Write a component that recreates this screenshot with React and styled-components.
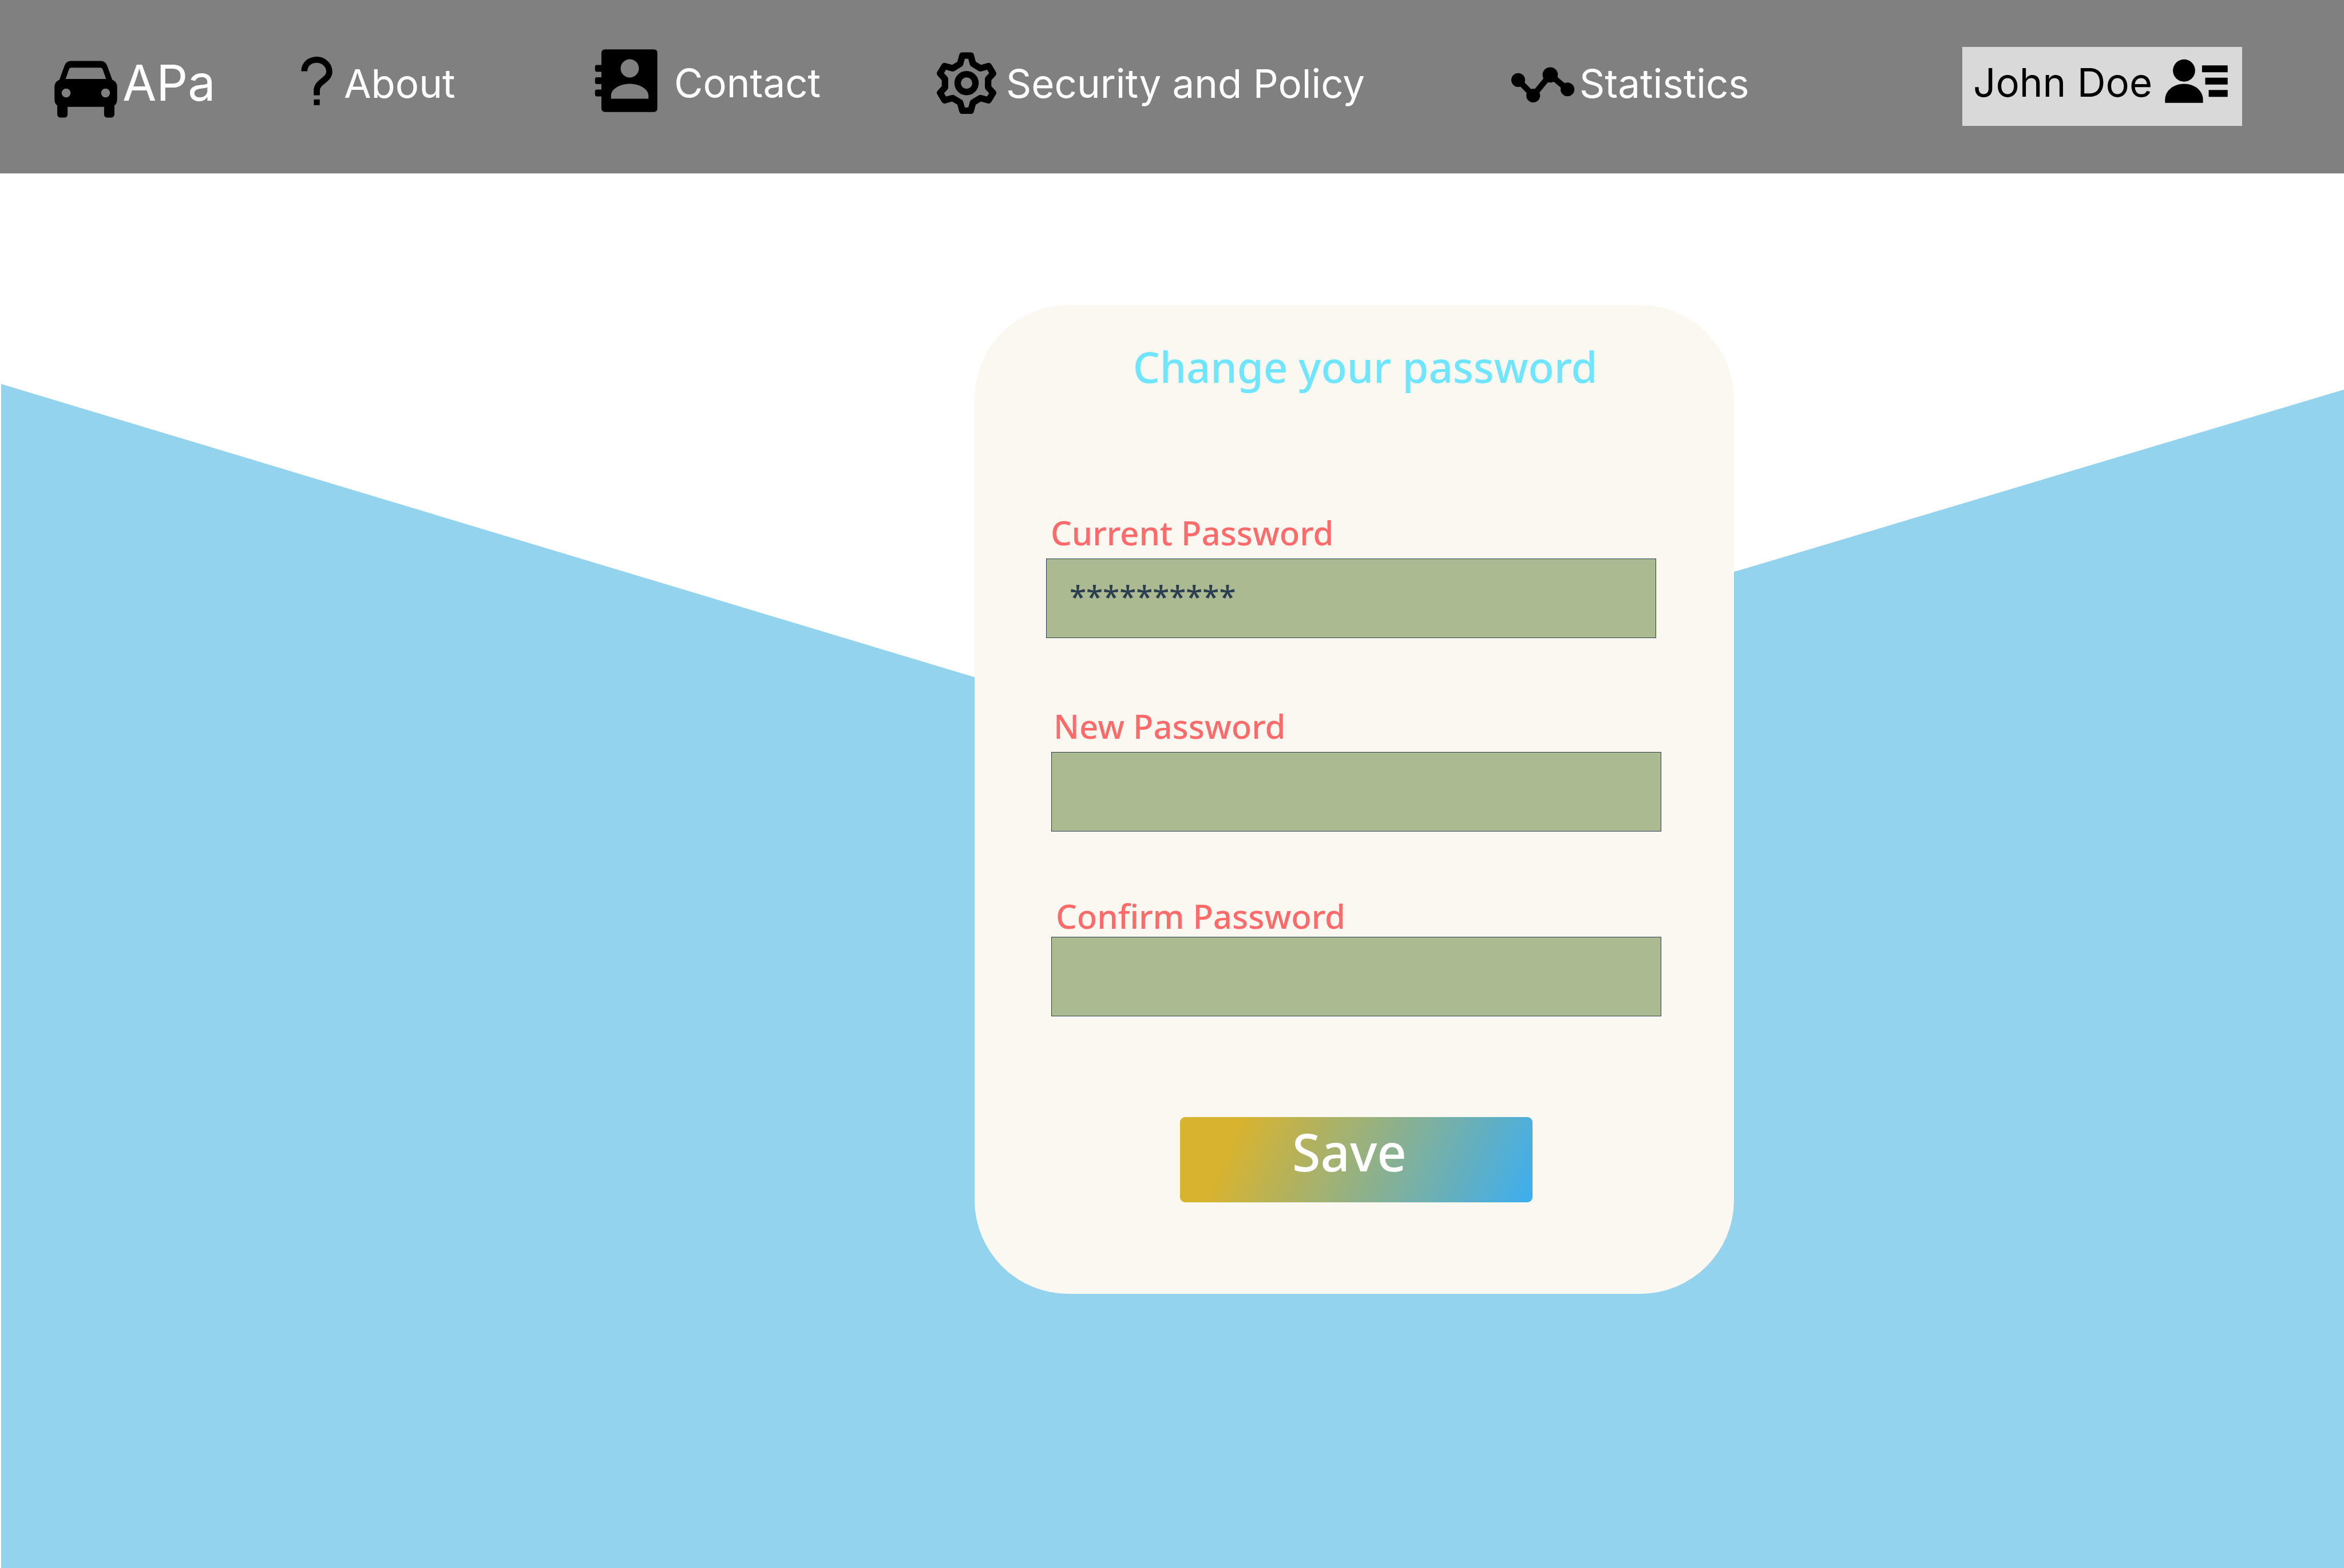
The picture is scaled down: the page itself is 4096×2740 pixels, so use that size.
import React from "react";
import styled, { createGlobalStyle } from "styled-components";

const GlobalStyle = createGlobalStyle`
  *, *::before, *::after { box-sizing: border-box; }
  body {
    margin: 0;
    background: #ffffff;
    font-family: Inter, "Liberation Sans", sans-serif;
  }
`;

const Page = styled.div`
  display: flex;
  flex-direction: column;
  min-height: 100vh;
`;

const Header = styled.header`
  display: grid;
  grid-template-columns: 430fr 514fr 599fr 1003fr 789fr 489fr 178fr;
  align-items: center;
  height: 303px;
  padding: 0 0 2px 94px;
  background: #808080;
`;

const Nav = styled.nav`
  display: contents;
`;

const NavLink = styled.a`
  display: flex;
  align-items: center;
  gap: ${({ $gap }) => $gap}px;
  padding-bottom: 10px;
  color: #ffffff;
  font-size: ${({ $brand }) => ($brand ? 86 : 69)}px;
  line-height: 100px;
  text-decoration: none;
  white-space: nowrap;
`;

const Account = styled.button`
  display: flex;
  align-items: center;
  justify-content: space-between;
  height: 138px;
  padding: 0 24px 14px 19px;
  border: 0;
  background: #d9d9d9;
  color: #000000;
  font: inherit;
  font-size: 69px;
  line-height: 100px;
  white-space: nowrap;
`;

const Icon = styled.svg`
  flex: none;
  width: ${({ $width }) => $width}px;
  fill: #000000;
`;

const Main = styled.main`
  flex: 1;
  display: grid;
  grid-template-columns: 1703fr 1327fr 1066fr;
  align-items: start;
`;

const Backdrop = styled.div`
  grid-area: 1 / 1 / 2 / 4;
  align-self: stretch;
  margin-left: 2px;
  background: #94d3ee;
  clip-path: polygon(0 15.1%, 50.2% 40.5%, 100% 15.5%, 100% 100%, 0 100%);
`;

const Card = styled.form`
  grid-area: 1 / 2 / 2 / 3;
  z-index: 1;
  display: flex;
  flex-direction: column;
  margin: 230px 0 80px;
  padding: 58px 127px 160px 125px;
  border-radius: 164px;
  background: #fbf8f1;
  font-family: "Noto Sans", "Open Sans", sans-serif;
  font-weight: 500;
`;

const Title = styled.h1`
  margin: 0 0 208px;
  padding-left: 40px;
  color: #70e5ff;
  font-size: 74px;
  font-weight: inherit;
  line-height: 100px;
  text-align: center;
`;

const Field = styled.div`
  display: flex;
  flex-direction: column;
  gap: ${({ $tight }) => ($tight ? 4 : 13)}px;
  margin: ${({ $start }) => ($start ? "0 9px 6px 0" : "0 0 0 9px")};
`;

const Fields = styled.div`
  display: flex;
  flex-direction: column;
  gap: 116px;
`;

const Label = styled.label`
  padding-left: ${({ $inset }) => $inset}px;
  color: #ff6b6b;
  font-size: 58px;
  line-height: 64px;
`;

const Input = styled.input`
  width: 100%;
  height: 139px;
  padding: 0 40px 8px;
  border: 1px solid #2c3e50;
  border-radius: 0;
  outline: 0;
  background: #abba90;
  color: #2c3e50;
  font: inherit;
  font-size: 53px;
`;

const Actions = styled.div`
  display: flex;
  justify-content: center;
  margin-top: 176px;
  padding-left: 9px;
`;

const SaveButton = styled.button`
  width: 616px;
  height: 149px;
  padding: 0 24px 30px 0;
  border: 0;
  border-radius: 9px;
  background: linear-gradient(114deg, #d8b32f 16%, #3caef1 100%);
  color: #ffffff;
  font: inherit;
  font-size: 90px;
  line-height: 110px;
`;

const CarIcon = () => (
  <Icon $width={112} viewBox="2 0 26 28" aria-hidden="true">
    <path
      fillRule="evenodd"
      d="M9 5h12q2 0 2.7 2L25.7 12.6Q27.7 13.4 27.7 15.5V20.5Q27.7 22.5 26.6 23V26.5Q26.6 28 25 28H23.8Q22.4 28 22.4 26.5V23.6H7.6V26.5Q7.6 28 6.2 28H5Q3.4 28 3.4 26.5V23Q2.3 22.5 2.3 20.5V15.5Q2.3 13.4 4.3 12.6L6.3 7Q7 5 9 5Z M9 7.7Q8.4 7.7 8.2 8.3L6.8 12.3H23.2L21.8 8.3Q21.6 7.7 21 7.7Z M5.2 18a1.8 1.8 0 1 0 3.6 0a1.8 1.8 0 1 0-3.6 0Z M21.2 18a1.8 1.8 0 1 0 3.6 0a1.8 1.8 0 1 0-3.6 0Z"
    />
  </Icon>
);

const QuestionIcon = () => (
  <Icon $width={60} viewBox="0 0 14 22" aria-hidden="true">
    <path
      d="M1.8 6.2C1.8 3.2 4.2 1.5 6.9 1.5S12 3.6 12 6.4C12 9.8 6.9 10.4 6.9 14V16"
      fill="none"
      stroke="#000000"
      strokeWidth="2.5"
    />
    <path d="M5.7 17.7h2.4v2.3h-2.4Z" />
  </Icon>
);

const ContactIcon = () => (
  <Icon $width={112} viewBox="0 0 26 28" aria-hidden="true">
    <path
      fillRule="evenodd"
      d="M4.6 .3H24.2Q25.7 .3 25.7 1.8V24.2Q25.7 25.7 24.2 25.7H4.6Q3 25.7 3 24.2V19.4H1.2Q.4 19.4 .4 18.6V17.4Q.4 16.6 1.2 16.6H3V14.4H1.2Q.4 14.4 .4 13.6V12.4Q.4 11.6 1.2 11.6H3V9.4H1.2Q.4 9.4 .4 8.6V7.4Q.4 6.6 1.2 6.6H3V1.8Q3 .3 4.6 .3Z M10.8 8a3.7 3.7 0 1 0 7.4 0a3.7 3.7 0 1 0-7.4 0Z M6.9 20.3H22.1V19.2C22.1 16.2 18.2 14.3 14.5 14.3S6.9 16.2 6.9 19.2Z"
    />
  </Icon>
);

const GearIcon = () => (
  <Icon $width={104} viewBox="0 0 24 26" aria-hidden="true">
    <g fill="none" stroke="#000000" strokeWidth="2.6" strokeLinejoin="round">
      <path d="M10.3 1.9h3.4L14.6 5.2 17.6 7 20.9 6.1 22.7 9.1 20.7 11.3V14.7L22.7 16.9 20.9 19.9 17.6 19 14.6 20.8 13.7 24.1H10.3L9.4 20.8 6.4 19 3.1 19.9 1.3 16.9 3.3 14.7V11.3L1.3 9.1 3.1 6.1 6.4 7 9.4 5.2Z" />
      <circle cx="12" cy="13" r="3.6" />
    </g>
  </Icon>
);

const StatisticsIcon = () => (
  <Icon $width={112} viewBox="0 -1 26 16" aria-hidden="true">
    <path d="M3 5.7L9.1 12L16 3.6L23 9.5" fill="none" stroke="#000000" strokeWidth="2.4" />
    <circle cx="3" cy="5.7" r="2.8" />
    <circle cx="9.1" cy="12" r="2.8" />
    <circle cx="16" cy="3.6" r="3.1" />
    <circle cx="23" cy="9.5" r="2.8" />
  </Icon>
);

const AccountIcon = () => (
  <Icon $width={112} viewBox="0 0 26 19" aria-hidden="true">
    <circle cx="8" cy="4.7" r="4.5" />
    <path d="M.3 17.8V16.6C.3 12.8 3.8 10.1 8 10.1S15.7 12.8 15.7 16.6V17.8Z" />
    <path d="M15.3 2.6H25.7V5.4H15.3Z M16.6 7.6H25.7V10.4H16.6Z M18 12.6H25.7V15.4H18Z" />
  </Icon>
);

export default function App() {
  return (
    <Page>
      <GlobalStyle />
      <Header>
        <NavLink href="#home" $gap={8} $brand>
          <CarIcon />
          APa
        </NavLink>
        <Nav aria-label="Main">
          <NavLink href="#about" $gap={17}>
            <QuestionIcon />
            About
          </NavLink>
          <NavLink href="#contact" $gap={28}>
            <ContactIcon />
            Contact
          </NavLink>
          <NavLink href="#security" $gap={17}>
            <GearIcon />
            Security and Policy
          </NavLink>
          <NavLink href="#statistics" $gap={8}>
            <StatisticsIcon />
            Statistics
          </NavLink>
        </Nav>
        <Account type="button">
          John Doe
          <AccountIcon />
        </Account>
      </Header>
      <Main>
        <Backdrop />
        <Card onSubmit={(event) => event.preventDefault()}>
          <Title>Change your password</Title>
          <Fields>
            <Field $start>
              <Label htmlFor="current" $inset={8}>Current Password</Label>
              <Input id="current" type="text" defaultValue="**********" />
            </Field>
            <Field>
              <Label htmlFor="next" $inset={4}>New Password</Label>
              <Input id="next" type="password" />
            </Field>
            <Field $tight>
              <Label htmlFor="confirm" $inset={8}>Confirm Password</Label>
              <Input id="confirm" type="password" />
            </Field>
          </Fields>
          <Actions>
            <SaveButton type="submit">Save</SaveButton>
          </Actions>
        </Card>
      </Main>
    </Page>
  );
}
